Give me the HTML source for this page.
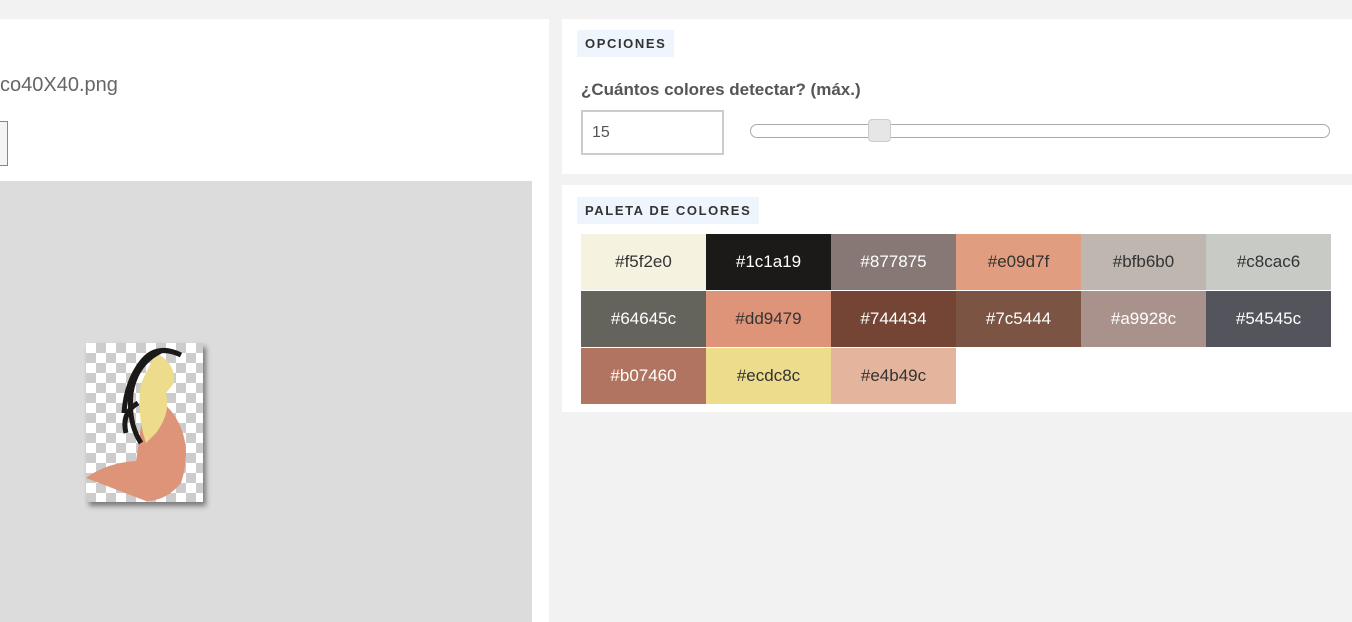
<!DOCTYPE html>
<html><head><meta charset="utf-8"><style>
body{margin:0;width:1352px;height:622px;overflow:hidden;background:#f2f2f2;font-family:"Liberation Sans",sans-serif;position:relative}
.abs{position:absolute}
.title{background:#eef5fc;color:#333;font-weight:bold;font-size:13px;letter-spacing:1.6px;padding:0 8px;line-height:27px}
.cell{position:absolute;width:125px;height:56px;line-height:56px;text-align:center;font-size:17px}
</style></head><body>
<div class="abs" style="left:0;top:19px;width:549px;height:603px;background:#fff"></div>
<div class="abs" style="left:0;top:74px;font-size:20px;color:#666">co40X40.png</div>
<div class="abs" style="left:-2px;top:121px;width:8px;height:43px;border:1px solid #888;background:#f4f4f4"></div>
<div class="abs" style="left:0;top:181px;width:532px;height:441px;background:#dcdcdc"></div>
<div class="abs" style="left:86px;top:343px;width:117px;height:159px;box-shadow:3px 4px 5px rgba(0,0,0,.45);background-color:#fff;background-image:linear-gradient(45deg,#ccc 25%,transparent 25%,transparent 75%,#ccc 75%),linear-gradient(45deg,#ccc 25%,transparent 25%,transparent 75%,#ccc 75%);background-size:20px 20px;background-position:0 0,10px 10px">
<svg width="117" height="159" viewBox="0 0 117 159">
<path d="M60 50 Q85 60 95 85 Q105 110 95 140 Q80 158 60 158 L0 135 Q20 120 50 118 Z" fill="#dd9479"/>
<path d="M70 10 Q90 20 88 40 L80 50 Q85 70 70 90 L60 100 Q50 70 55 40 Z" fill="#ecdc8c"/>
<path d="M95 12 Q70 0 55 20 Q40 40 38 70 M75 8 Q50 20 45 50 Q42 80 55 100 M52 60 Q35 70 40 90" stroke="#1c1a19" stroke-width="5" fill="none"/>
</svg></div>

<div class="abs" style="left:562px;top:19px;width:790px;height:155px;background:#fff"></div>
<div class="abs title" style="left:577px;top:30px">OPCIONES</div>
<div class="abs" style="left:581px;top:80px;font-size:17px;font-weight:bold;color:#555">¿Cuántos colores detectar? (máx.)</div>
<div class="abs" style="left:581px;top:110px;border:2px solid #ccc;font-size:16px;color:#555;line-height:41px;text-indent:9px;width:139px;height:41px">15</div>
<div class="abs" style="left:750px;top:124px;width:578px;height:12px;border:1px solid #aaa;border-radius:7px;background:#fff"></div>
<div class="abs" style="left:868px;top:119px;width:21px;height:21px;border:1px solid #ccc;border-radius:4px;background:#e6e6e6"></div>

<div class="abs" style="left:562px;top:185px;width:790px;height:227px;background:#fff"></div>
<div class="abs title" style="left:577px;top:197px">PALETA DE COLORES</div>
<div class="cell" style="left:581px;top:234px;background:#f5f2e0;color:#333">#f5f2e0</div>
<div class="cell" style="left:706px;top:234px;background:#1c1a19;color:#fff">#1c1a19</div>
<div class="cell" style="left:831px;top:234px;background:#877875;color:#fff">#877875</div>
<div class="cell" style="left:956px;top:234px;background:#e09d7f;color:#333">#e09d7f</div>
<div class="cell" style="left:1081px;top:234px;background:#bfb6b0;color:#333">#bfb6b0</div>
<div class="cell" style="left:1206px;top:234px;background:#c8cac6;color:#333">#c8cac6</div>
<div class="cell" style="left:581px;top:291px;background:#64645c;color:#fff">#64645c</div>
<div class="cell" style="left:706px;top:291px;background:#dd9479;color:#333">#dd9479</div>
<div class="cell" style="left:831px;top:291px;background:#744434;color:#fff">#744434</div>
<div class="cell" style="left:956px;top:291px;background:#7c5444;color:#fff">#7c5444</div>
<div class="cell" style="left:1081px;top:291px;background:#a9928c;color:#fff">#a9928c</div>
<div class="cell" style="left:1206px;top:291px;background:#54545c;color:#fff">#54545c</div>
<div class="cell" style="left:581px;top:348px;background:#b07460;color:#fff">#b07460</div>
<div class="cell" style="left:706px;top:348px;background:#ecdc8c;color:#333">#ecdc8c</div>
<div class="cell" style="left:831px;top:348px;background:#e4b49c;color:#333">#e4b49c</div>
</body></html>
